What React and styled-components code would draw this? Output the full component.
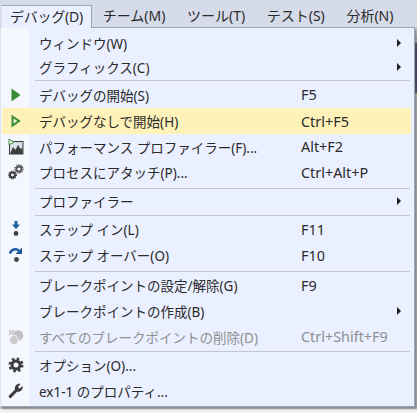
import React from 'react'
import styled, { createGlobalStyle } from 'styled-components'

const GlobalStyle = createGlobalStyle`
  html, body {
    margin: 0;
    padding: 0;
    background: #fff;
  }
  body {
    width: 417px;
    height: 413px;
    overflow: hidden;
    font-family: "Noto Sans", "Noto Sans CJK JP", sans-serif;
    font-size: 13.5px;
    color: #2a2a2a;
  }
`

const Page = styled.div`
  width: 417px;
  height: 413px;
  display: flex;
  flex-direction: column;
  /* the window behind the menu only peeks out along the right edge */
  background: linear-gradient(
    to bottom,
    #d6dbe9 0 36px,
    #b9bdc7 36px 43px,
    #2d3a55 43px 93px,
    #d8c860 93px 95px,
    #c9cbd1 95px 409px,
    #f4f4f4 409px
  );
`
const MenuBar = styled.div`
  flex: none;
  height: 28px;
  box-sizing: border-box;
  padding: 5px 0 0 1px;
  display: flex;
  background: #d6dbe9;
`
const MenuTitle = styled.div`
  box-sizing: border-box;
  height: ${({ $active }) => ($active ? '23px' : '22px')};
  padding: 0 ${({ $active }) => ($active ? '8px' : '10.8px')};
  line-height: 21px;
  font-size: 14px;
  white-space: nowrap;
  position: relative;
  z-index: 1;
  ${({ $active }) => $active && `
    letter-spacing: -0.25px;
    background: #eaf0ff;
    border: 1px solid #9ba7b7;
    border-left-color: #dfe4ee;
    border-bottom: none;
  `}
`
const Dropdown = styled.div`
  flex: none;
  box-sizing: border-box;
  width: 415px;
  height: 380px;
  margin-top: -1px;
  border: 1px solid #9ba7b7;
  border-left-color: #dfe4ee;
  background: linear-gradient(to right, #f5f7ff 0, #f5f7ff 28px, #eaf0ff 28px);
  box-shadow: 2px 2px 2px rgba(90, 92, 100, 0.6);
  padding: 3px 3px 0 1px;
  display: flex;
  flex-direction: column;
`
const Row = styled.div`
  flex: none;
  display: grid;
  grid-template-columns: 27px 272px 96px 1fr;
  align-items: center;
  height: ${({ $height }) => $height}px;
  color: ${({ $disabled }) => ($disabled ? '#8f8f8f' : '#2a2a2a')};
  background: ${({ $selected }) => ($selected ? '#fff2b9' : 'transparent')};
  white-space: nowrap;
`
const IconSlot = styled.div`
  display: flex;
  align-items: center;
  justify-content: center;
`
const Label = styled.span`
  padding-left: 10px;
`
const Shortcut = styled.span`
  font-size: 14.4px;
`
const Arrow = styled.span`
  width: 0;
  height: 0;
  border-left: 4px solid #1e1e1e;
  border-top: 4px solid transparent;
  border-bottom: 4px solid transparent;
`
const Separator = styled.div`
  flex: none;
  height: 1px;
  margin: ${({ $top }) => $top}px 1px 0 33px;
  background: #c2c6d0;
`

const PlayIcon = () => (
  <svg width="12" height="14" viewBox="0 0 12 14">
    <path d="M1.5 0.5 L10.5 7 L1.5 13.5 Z" fill="#388a34" />
  </svg>
)
const PlayOutlineIcon = () => (
  <svg width="12" height="14" viewBox="0 0 12 14">
    <path d="M2.5 2.5 L9 7 L2.5 11.5 Z" fill="#eaf7e4" stroke="#388a34" strokeWidth="2" />
  </svg>
)
const ProfilerIcon = () => (
  <svg width="16" height="16" viewBox="0 0 16 16">
    <rect x="1.5" y="2.5" width="13.5" height="12.5" fill="#d9dfe6" stroke="#3c3c3c" />
    <path d="M2 15 L5 8 L7.5 11 L10 6 L12.5 10 L14.5 8.5 V15 Z" fill="#3c3c3c" />
    <path d="M1 0 L6 3 L1 6 Z" fill="#eaf7e4" stroke="#388a34" />
  </svg>
)
const GearShape = ({ cx, cy, r, color }) => (
  <g>
    <circle cx={cx} cy={cy} r={r * 0.62} fill="none" stroke={color} strokeWidth={r * 0.5} />
    <circle cx={cx} cy={cy} r={r * 0.95} fill="none" stroke={color} strokeWidth={r * 0.35} strokeDasharray="1.1 1.1" />
  </g>
)
const AttachIcon = () => (
  <svg width="16" height="16" viewBox="0 0 16 16">
    <GearShape cx={11} cy={5} r={4.2} color="#5a5a5a" />
    <GearShape cx={4.5} cy={11} r={4} color="#3c3c3c" />
  </svg>
)
const StepInIcon = () => (
  <svg width="14" height="16" viewBox="0 0 14 16">
    <path d="M5.6 0 H8.4 V3.5 H11 L7 8 L3 3.5 H5.6 Z" fill="#1e5a9e" />
    <circle cx="7" cy="12.5" r="2.4" fill="#424242" />
  </svg>
)
const StepOverIcon = () => (
  <svg width="16" height="16" viewBox="0 0 16 16">
    <path d="M2 6.5 C3 2 8.5 1 11 4" fill="none" stroke="#1e5a9e" strokeWidth="2.6" />
    <path d="M14 0.5 V7 H7.5 Z" fill="#1e5a9e" />
    <circle cx="8.5" cy="12.5" r="2.4" fill="#424242" />
  </svg>
)
const ClearBreakpointsIcon = () => (
  <svg width="16" height="16" viewBox="0 0 16 16">
    <circle cx="10" cy="6.5" r="5.3" fill="#c2c2c2" />
    <circle cx="6" cy="11" r="4.6" fill="#cdcdcd" stroke="#f5f7ff" strokeWidth="0.8" />
    <path d="M1 1 L6 6 M6 1 L1 6" stroke="#c8c8c8" strokeWidth="1.6" />
  </svg>
)
const OptionsIcon = () => (
  <svg width="16" height="16" viewBox="0 0 16 16">
    <circle cx="8" cy="8" r="4" fill="none" stroke="#3c3c3c" strokeWidth="3" />
    <circle cx="8" cy="8" r="6.3" fill="none" stroke="#3c3c3c" strokeWidth="2.4" strokeDasharray="2.5 2.45" />
  </svg>
)
const WrenchIcon = () => (
  <svg width="16" height="16" viewBox="0 0 16 16">
    <path d="M1.5 15 L0.5 13 L7 6.5 C6.2 3 9 0.2 12.5 1 L10 3.8 L11.5 5.8 L14.5 3 C15.3 6.5 12.5 9.5 9 8.7 L3 15 Z" fill="#3c3c3c" />
  </svg>
)

const titles = ['チーム(M)', 'ツール(T)', 'テスト(S)', '分析(N)']

const groups = [
  {
    top: 0,
    items: [
      { label: 'ウィンドウ(W)', arrow: true, height: 24 },
      { label: 'グラフィックス(C)', arrow: true, height: 23 },
    ],
  },
  {
    top: 2,
    items: [
      { label: 'デバッグの開始(S)', shortcut: 'F5', icon: <PlayIcon />, height: 27 },
      { label: 'デバッグなしで開始(H)', shortcut: 'Ctrl+F5', icon: <PlayOutlineIcon />, height: 26, selected: true },
      { label: 'パフォーマンス プロファイラー(F)...', shortcut: 'Alt+F2', icon: <ProfilerIcon />, height: 25 },
      { label: 'プロセスにアタッチ(P)...', shortcut: 'Ctrl+Alt+P', icon: <AttachIcon />, height: 26 },
    ],
  },
  { top: 3, items: [{ label: 'プロファイラー', arrow: true, height: 24 }] },
  {
    top: 2,
    items: [
      { label: 'ステップ イン(L)', shortcut: 'F11', icon: <StepInIcon />, height: 26 },
      { label: 'ステップ オーバー(O)', shortcut: 'F10', icon: <StepOverIcon />, height: 26 },
    ],
  },
  {
    top: 3,
    items: [
      { label: 'ブレークポイントの設定/解除(G)', shortcut: 'F9', height: 26 },
      { label: 'ブレークポイントの作成(B)', arrow: true, height: 26 },
      { label: 'すべてのブレークポイントの削除(D)', shortcut: 'Ctrl+Shift+F9', icon: <ClearBreakpointsIcon />, height: 25, disabled: true },
    ],
  },
  {
    top: 2,
    items: [
      { label: 'オプション(O)...', icon: <OptionsIcon />, height: 26 },
      { label: 'ex1-1 のプロパティ...', icon: <WrenchIcon />, height: 26 },
    ],
  },
]

function MenuRow ({ label, shortcut, icon, arrow, height, selected, disabled }) {
  return (
    <Row $height={height} $selected={selected} $disabled={disabled}>
      <IconSlot>{icon}</IconSlot>
      <Label>{label}</Label>
      <Shortcut>{shortcut}</Shortcut>
      {arrow && <Arrow />}
    </Row>
  )
}

export default function App () {
  return (
    <Page>
      <GlobalStyle />
      <MenuBar>
        <MenuTitle $active>デバッグ(D)</MenuTitle>
        {titles.map(title => <MenuTitle key={title}>{title}</MenuTitle>)}
      </MenuBar>
      <Dropdown>
        {groups.map((group, i) => (
          <React.Fragment key={i}>
            {i > 0 && <Separator $top={group.top} />}
            {group.items.map(item => <MenuRow key={item.label} {...item} />)}
          </React.Fragment>
        ))}
      </Dropdown>
    </Page>
  )
}
